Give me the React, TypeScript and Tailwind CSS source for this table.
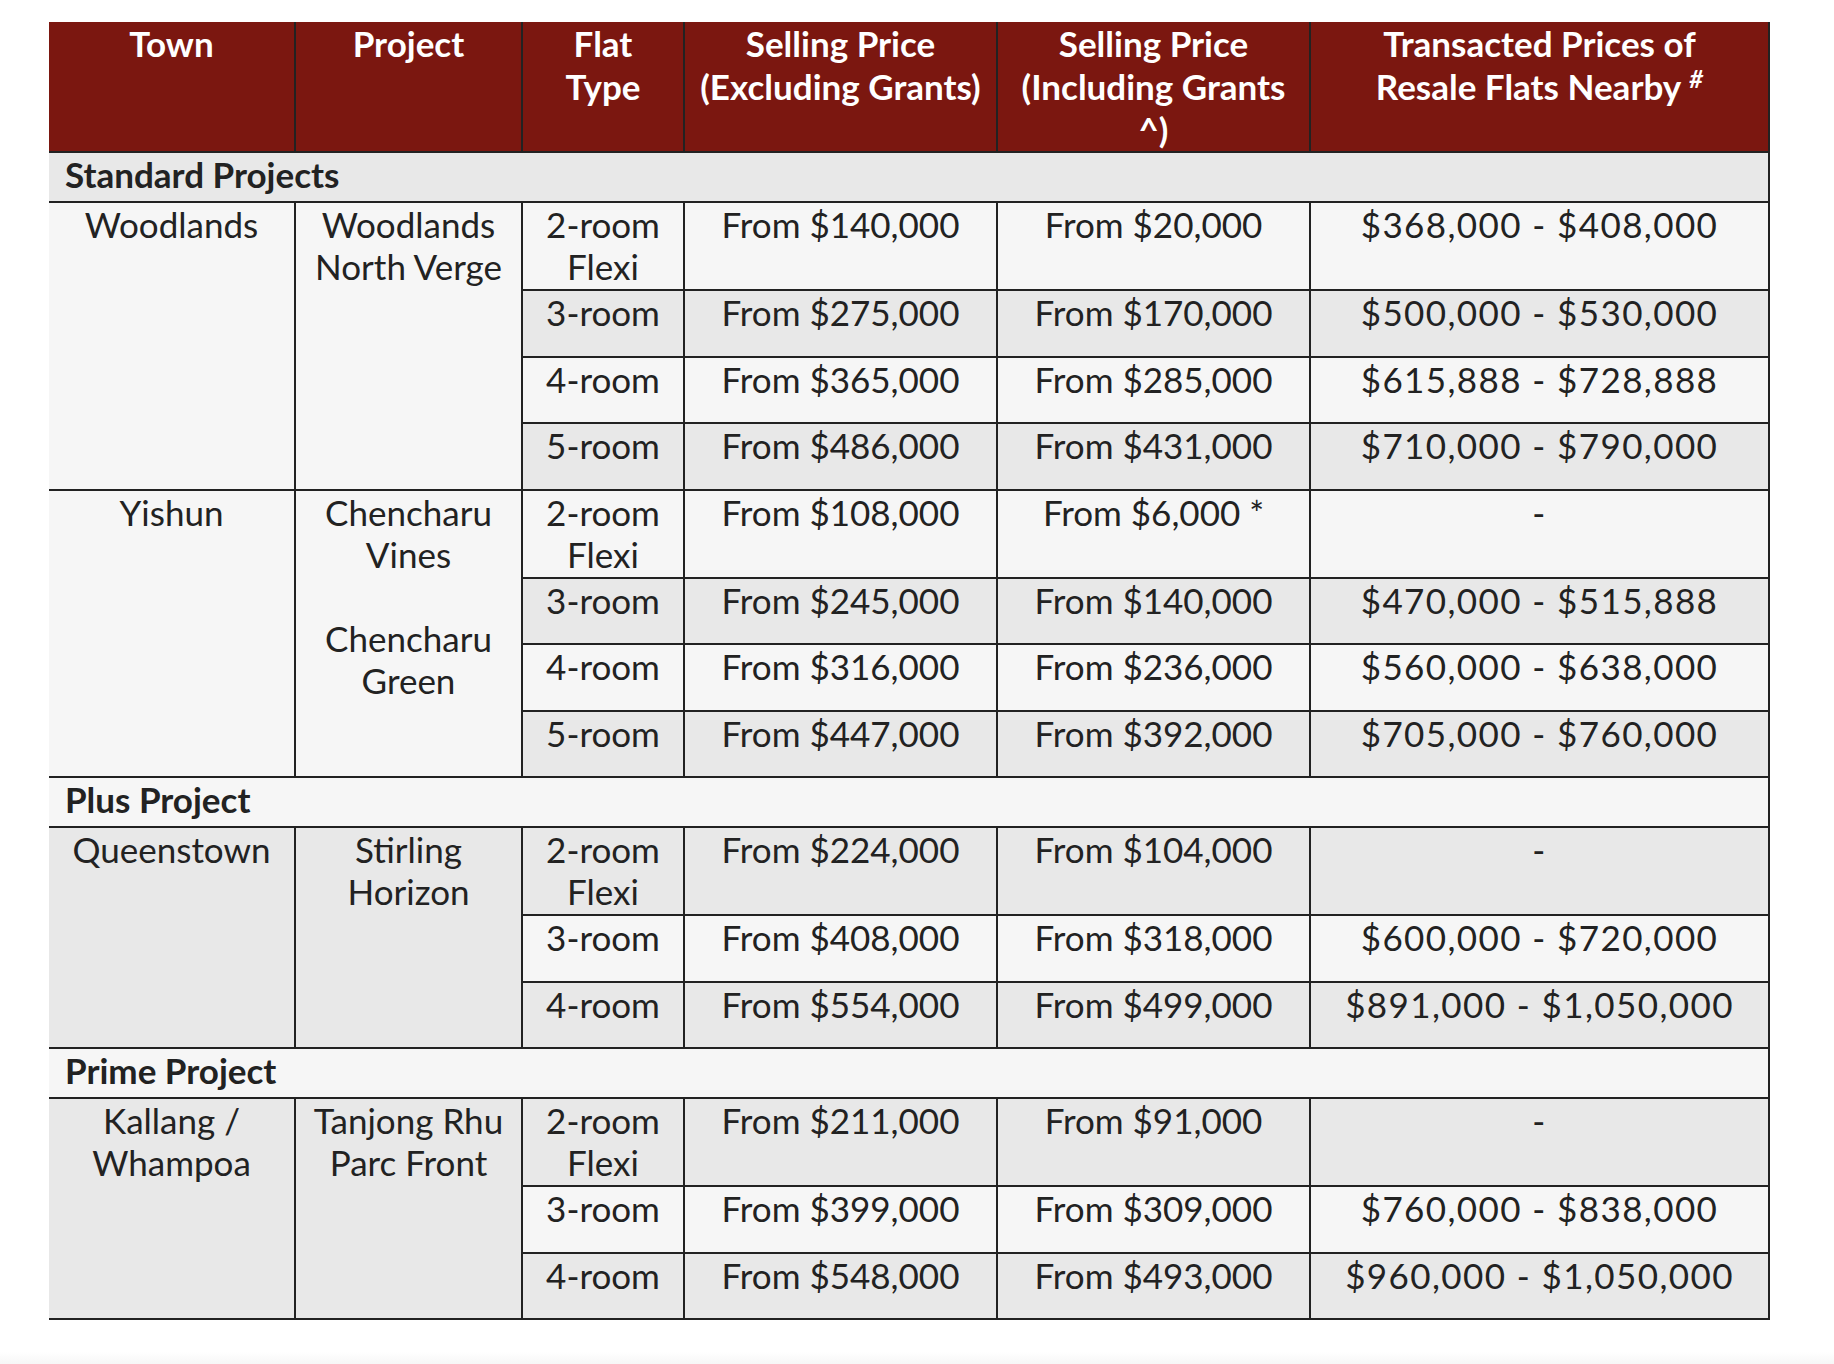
import React from "react";

type Row = { flat: string[]; excl: string; incl: string; resale: string };
type Group = { town: string[]; project: string[]; rows: Row[] };
type Section = { title: string; groups: Group[] };

const data: Section[] = [
  {
    title: "Standard Projects",
    groups: [
      {
        town: ["Woodlands"],
        project: ["Woodlands", "North Verge"],
        rows: [
          { flat: ["2-room", "Flexi"], excl: "From $140,000", incl: "From $20,000", resale: "$368,000 - $408,000" },
          { flat: ["3-room"], excl: "From $275,000", incl: "From $170,000", resale: "$500,000 - $530,000" },
          { flat: ["4-room"], excl: "From $365,000", incl: "From $285,000", resale: "$615,888 - $728,888" },
          { flat: ["5-room"], excl: "From $486,000", incl: "From $431,000", resale: "$710,000 - $790,000" },
        ],
      },
      {
        town: ["Yishun"],
        project: ["Chencharu", "Vines", "\u00a0", "Chencharu", "Green"],
        rows: [
          { flat: ["2-room", "Flexi"], excl: "From $108,000", incl: "From $6,000 *", resale: "-" },
          { flat: ["3-room"], excl: "From $245,000", incl: "From $140,000", resale: "$470,000 - $515,888" },
          { flat: ["4-room"], excl: "From $316,000", incl: "From $236,000", resale: "$560,000 - $638,000" },
          { flat: ["5-room"], excl: "From $447,000", incl: "From $392,000", resale: "$705,000 - $760,000" },
        ],
      },
    ],
  },
  {
    title: "Plus Project",
    groups: [
      {
        town: ["Queenstown"],
        project: ["Stirling", "Horizon"],
        rows: [
          { flat: ["2-room", "Flexi"], excl: "From $224,000", incl: "From $104,000", resale: "-" },
          { flat: ["3-room"], excl: "From $408,000", incl: "From $318,000", resale: "$600,000 - $720,000" },
          { flat: ["4-room"], excl: "From $554,000", incl: "From $499,000", resale: "$891,000 - $1,050,000" },
        ],
      },
    ],
  },
  {
    title: "Prime Project",
    groups: [
      {
        town: ["Kallang /", "Whampoa"],
        project: ["Tanjong Rhu", "Parc Front"],
        rows: [
          { flat: ["2-room", "Flexi"], excl: "From $211,000", incl: "From $91,000", resale: "-" },
          { flat: ["3-room"], excl: "From $399,000", incl: "From $309,000", resale: "$760,000 - $838,000" },
          { flat: ["4-room"], excl: "From $548,000", incl: "From $493,000", resale: "$960,000 - $1,050,000" },
        ],
      },
    ],
  },
];

const Lines = ({ lines }: { lines: string[] }) => (
  <>
    {lines.map((l, i) => (
      <div key={i}>{l}</div>
    ))}
  </>
);

const cell = "border-r-2 border-b-2 border-[#222] align-top text-center p-0";
const th = "border-r-2 border-b-2 border-[#222] align-top text-center p-0 font-bold text-white leading-[43px] bg-[#7b1710]";

export default function App() {
  let idx = 0;
  const rows: React.ReactNode[] = [];
  data.forEach((sec, si) => {
    idx++;
    const sbg = idx % 2 === 1 ? "bg-[#e8e8e8]" : "bg-[#f6f6f6]";
    rows.push(
      <tr key={`s${si}`} className={sbg}>
        <td colSpan={6} className="border-r-2 border-b-2 border-[#222] p-0 text-left font-bold">
          <div className="h-[48px] pl-[16px]">{sec.title}</div>
        </td>
      </tr>
    );
    sec.groups.forEach((g, gi) => {
      g.rows.forEach((r, ri) => {
        idx++;
        const bg = idx % 2 === 1 ? "bg-[#e8e8e8]" : "bg-[#f6f6f6]";
        const minH = r.flat.length > 1 ? "min-h-[86px]" : "min-h-[64.5px]";
        rows.push(
          <tr key={`r${si}-${gi}-${ri}`} className={bg}>
            {ri === 0 && (
              <td rowSpan={g.rows.length} className={cell}>
                <Lines lines={g.town} />
              </td>
            )}
            {ri === 0 && (
              <td rowSpan={g.rows.length} className={cell}>
                <Lines lines={g.project} />
              </td>
            )}
            <td className={cell}>
              <div className={minH}>
                <Lines lines={r.flat} />
              </div>
            </td>
            <td className={cell}>
              <div className={minH}>{r.excl}</div>
            </td>
            <td className={cell}>
              <div className={minH}>{r.incl}</div>
            </td>
            <td className={cell}>
              <div className={`${minH} tracking-[1.4px]`}>{r.resale}</div>
            </td>
          </tr>
        );
      });
    });
  });

  return (
    <div className="min-h-screen bg-white font-['Lato',sans-serif] text-[35px] leading-[42px] text-[#222]">
      <div className="pt-[22px] pl-[49px]">
        <table className="table-fixed border-collapse w-[1720px]">
          <colgroup>
            <col className="w-[246px]" />
            <col className="w-[227px]" />
            <col className="w-[162px]" />
            <col className="w-[313px]" />
            <col className="w-[313px]" />
            <col className="w-[459px]" />
          </colgroup>
          <thead>
            <tr>
              <th className={th}>
                <div className="h-[129px]">Town</div>
              </th>
              <th className={th}>Project</th>
              <th className={th}>
                <div>Flat</div>
                <div>Type</div>
              </th>
              <th className={th}>
                <div>Selling Price</div>
                <div>(Excluding Grants)</div>
              </th>
              <th className={th}>
                <div>Selling Price</div>
                <div>(Including Grants</div>
                <div>^)</div>
              </th>
              <th className={th}>
                <div>Transacted Prices of</div>
                <div className="whitespace-nowrap">
                  Resale Flats Nearby
                  <span className="relative top-[-12px] ml-[8px] text-[24px] italic">#</span>
                </div>
              </th>
            </tr>
          </thead>
          <tbody>{rows}</tbody>
        </table>
      </div>
      <div className="mt-[32px] h-[14px] bg-gradient-to-b from-white to-[#f5f5f5]" />
    </div>
  );
}
